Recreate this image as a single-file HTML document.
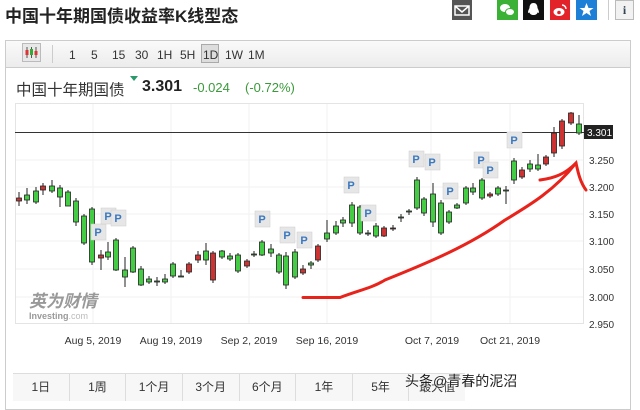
<!DOCTYPE html>
<html><head><meta charset="utf-8"><style>
body{margin:0;width:640px;height:400px;background:#fff;overflow:hidden;position:relative;font-family:"Liberation Sans","Noto Sans CJK SC",sans-serif}
.a{position:absolute}
.ic{position:absolute;top:0;width:20px;height:20px}
.tb span{position:absolute;top:48px;font-size:12px;color:#333}
.btns{position:absolute;left:13px;top:373px;width:452px;height:27px;border-top:1px solid #ddd;background:#f7f7f7;display:flex}
.btns div{flex:1;border-right:1px solid #ddd;text-align:center;font-size:12px;line-height:26px;color:#333}
</style></head><body>
<div class="a" style="left:5px;top:2px;font-size:17px;font-weight:bold;color:#222">中国十年期国债收益率K线型态</div>
<div class="ic" style="left:452px;background:#555"><svg width="20" height="20"><path d="M3 6h14v9H3zM3 6l7 6 7-6" fill="none" stroke="#fff" stroke-width="1.5"/></svg></div>
<div class="ic" style="left:497px;background:#3bb236;width:21px"><svg width="21" height="20"><ellipse cx="8" cy="8" rx="5" ry="4" fill="#fff"/><ellipse cx="13" cy="12" rx="4.5" ry="3.5" fill="#fff" stroke="#3bb236"/></svg></div>
<div class="ic" style="left:523px;background:#111;width:21px"><svg width="21" height="20"><path d="M10.5 3c3 0 4 2.5 4 5 1 2 2 4 1 5-1 0-1-1-1-1 0 2-2 3-4 3s-4-1-4-3c0 0 0 1-1 1-1-1 0-3 1-5 0-2.5 1-5 4-5z" fill="#fff"/></svg></div>
<div class="ic" style="left:550px;background:#e2232a"><svg width="20" height="20"><ellipse cx="9" cy="12" rx="5.5" ry="4" fill="#fff"/><circle cx="9" cy="12.5" r="1.8" fill="#e2232a"/><path d="M12 5a4 4 0 0 1 4 4" stroke="#fff" fill="none" stroke-width="1.5"/></svg></div>
<div class="ic" style="left:576px;background:#1e7fd6;width:21px"><svg width="21" height="20"><path d="M10.5 3l2 5h5l-4 3 1.5 5-4.5-3-4.5 3 1.5-5-4-3h5z" fill="#fff"/></svg></div>
<div class="a" style="left:608px;top:0;width:1px;height:20px;background:#ccc"></div>
<div class="a" style="left:615px;top:0;width:19px;height:20px;background:#f2f2f2;border:1px solid #bbb;box-sizing:border-box;font:bold 12px 'Liberation Serif',serif;color:#345;text-align:center;line-height:19px">i</div>

<div class="a" style="left:5px;top:40px;width:626px;height:370px;border:1px solid #ccc;box-sizing:border-box"></div>
<div class="a" style="left:6px;top:41px;width:624px;height:26px;background:linear-gradient(#fafafa,#ececec);border-bottom:1px solid #ccc"></div>
<div class="a" style="left:22px;top:43px;width:19px;height:19px;border:1px solid #bbb;background:#e8e8e8;box-sizing:border-box"><svg width="17" height="17"><path d="M4 3v11M8.5 3v11M13 3v11" stroke="#555"/><rect x="2.5" y="6" width="3" height="5" fill="#d33"/><rect x="7" y="5" width="3" height="6" fill="#3a3"/><rect x="11.5" y="7" width="3" height="4" fill="#d33"/></svg></div>
<div class="a" style="left:52px;top:45px;width:1px;height:18px;background:#ccc"></div>
<div class="a" style="left:201px;top:44px;width:18px;height:19px;border:1px solid #aaa;background:#ddd;box-sizing:border-box"></div>
<div class="tb"><span style="left:69px">1</span><span style="left:91px">5</span><span style="left:112px">15</span><span style="left:135px">30</span><span style="left:157px">1H</span><span style="left:180px">5H</span><span style="left:203px">1D</span><span style="left:225px">1W</span><span style="left:248px">1M</span></div>

<div class="a" style="left:16px;top:78px;font-size:15.5px;color:#333">中国十年期国债</div>
<svg class="a" style="left:130px;top:76px" width="8" height="6"><path d="M0 0h8l-4 5z" fill="#2a9a6a"/></svg>
<div class="a" style="left:142px;top:78px;font-size:16px;font-weight:bold;color:#222">3.301</div>
<div class="a" style="left:193px;top:80px;font-size:13px;color:#3a9a3a">-0.024</div>
<div class="a" style="left:245px;top:80px;font-size:13px;color:#3a9a3a">(-0.72%)</div>

<svg class="a" style="left:0;top:0" width="640" height="400">
<rect x="15.5" y="103.5" width="568" height="220" fill="none" stroke="#e4e4e4"/>
<g stroke="#f2f2f2"><path d="M93 104v219M171 104v219M249 104v219M327 104v219M431 104v219M510 104v219M16 160h567M16 187h567M16 214h567M16 241h567M16 269h567M16 297h567"/></g>
<path d="M15 132.5h570" stroke="#333"/>
<g stroke="#222" stroke-width="1">
<path d="M19 192v14M27 188v16M36 187v17M43 183v12M52 180v13M60 185v22M68 190v16M76 198v28M84 214v31M92 207v58M101 250v20M108 242v18M116 238v33M125 257v30M133 246v27M141 266v20M149 276v8M157 277v9M165 274v10M173 262v16M181 270v7M189 262v12M198 251v12M206 243v22M213 251v32M222 250v9M230 253v8M238 253v20M247 259v9M254 251v6M262 240v16M271 244v13M279 253v21M286 252v37M295 249v30M303 265v10M311 261v8M318 244v18M327 220v22M336 221v14M343 217v10M352 202v25M360 205v30M368 230v6M376 223v15M384 226v11M393 225v6M401 214v8M409 209v6M417 177v33M424 197v19M433 183v44M441 200v35M449 210v14M457 203v6M466 186v19M473 183v12M482 178v22M490 192v6M498 186v10M506 186v18M514 158v26M522 167v12M530 160v12M538 154v17M546 155v11M554 127v30M562 119v30M571 112v13M579 115v20"/>
</g>
<g stroke="#222" stroke-width="0.8">
<rect x="16.5" y="198" width="5" height="3" fill="#c33"/>
<rect x="24.5" y="195" width="5" height="5" fill="#4c4"/>
<rect x="33.5" y="191" width="5" height="11" fill="#4c4"/>
<rect x="40.5" y="186" width="5" height="4" fill="#c33"/>
<rect x="49.5" y="186" width="5" height="5" fill="#4c4"/>
<rect x="57.5" y="188" width="5" height="9" fill="#4c4"/>
<rect x="65.5" y="192" width="5" height="14" fill="#4c4"/>
<rect x="73.5" y="201" width="5" height="21" fill="#4c4"/>
<rect x="81.5" y="216" width="5" height="27" fill="#4c4"/>
<rect x="89.5" y="209" width="5" height="53" fill="#4c4"/>
<rect x="98.5" y="255" width="5" height="3" fill="#c33"/>
<rect x="105.5" y="252" width="5" height="5" fill="#4c4"/>
<rect x="113.5" y="240" width="5" height="30" fill="#4c4"/>
<rect x="122.5" y="270" width="5" height="7" fill="#4c4"/>
<rect x="130.5" y="248" width="5" height="24" fill="#4c4"/>
<rect x="138.5" y="269" width="5" height="16" fill="#4c4"/>
<rect x="146.5" y="279" width="5" height="3" fill="#4c4"/>
<rect x="154.5" y="281" width="5" height="1" fill="#4c4"/>
<rect x="162.5" y="279" width="5" height="3" fill="#4c4"/>
<rect x="170.5" y="264" width="5" height="12" fill="#4c4"/>
<rect x="178.5" y="276" width="5" height="1" fill="#4c4"/>
<rect x="186.5" y="264" width="5" height="8" fill="#c33"/>
<rect x="195.5" y="255" width="5" height="5" fill="#c33"/>
<rect x="203.5" y="251" width="5" height="9" fill="#4c4"/>
<rect x="210.5" y="253" width="5" height="27" fill="#c33"/>
<rect x="219.5" y="251" width="5" height="6" fill="#4c4"/>
<rect x="227.5" y="256" width="5" height="3" fill="#4c4"/>
<rect x="235.5" y="255" width="5" height="16" fill="#4c4"/>
<rect x="244.5" y="261" width="5" height="5" fill="#c33"/>
<rect x="251.5" y="254" width="5" height="1" fill="#4c4"/>
<rect x="259.5" y="242" width="5" height="13" fill="#4c4"/>
<rect x="268.5" y="249" width="5" height="4" fill="#4c4"/>
<rect x="276.5" y="255" width="5" height="17" fill="#4c4"/>
<rect x="283.5" y="256" width="5" height="29" fill="#4c4"/>
<rect x="292.5" y="252" width="5" height="25" fill="#4c4"/>
<rect x="300.5" y="269" width="5" height="4" fill="#c33"/>
<rect x="308.5" y="263" width="5" height="2" fill="#4c4"/>
<rect x="315.5" y="246" width="5" height="14" fill="#c33"/>
<rect x="324.5" y="233" width="5" height="6" fill="#4c4"/>
<rect x="333.5" y="226" width="5" height="7" fill="#4c4"/>
<rect x="340.5" y="220" width="5" height="3" fill="#4c4"/>
<rect x="349.5" y="205" width="5" height="18" fill="#4c4"/>
<rect x="357.5" y="207" width="5" height="26" fill="#4c4"/>
<rect x="365.5" y="233" width="5" height="1" fill="#4c4"/>
<rect x="373.5" y="226" width="5" height="10" fill="#4c4"/>
<rect x="381.5" y="228" width="5" height="8" fill="#c33"/>
<rect x="390.5" y="228" width="5" height="1" fill="#c33"/>
<rect x="398.5" y="217" width="5" height="1" fill="#4c4"/>
<rect x="406.5" y="211" width="5" height="1" fill="#4c4"/>
<rect x="414.5" y="180" width="5" height="28" fill="#4c4"/>
<rect x="421.5" y="199" width="5" height="14" fill="#4c4"/>
<rect x="430.5" y="194" width="5" height="28" fill="#4c4"/>
<rect x="438.5" y="203" width="5" height="30" fill="#4c4"/>
<rect x="446.5" y="212" width="5" height="10" fill="#4c4"/>
<rect x="454.5" y="205" width="5" height="3" fill="#4c4"/>
<rect x="463.5" y="188" width="5" height="15" fill="#4c4"/>
<rect x="470.5" y="188" width="5" height="4" fill="#4c4"/>
<rect x="479.5" y="180" width="5" height="18" fill="#4c4"/>
<rect x="487.5" y="194" width="5" height="2" fill="#c33"/>
<rect x="495.5" y="188" width="5" height="6" fill="#4c4"/>
<rect x="503.5" y="190" width="5" height="1" fill="#4c4"/>
<rect x="511.5" y="161" width="5" height="19" fill="#4c4"/>
<rect x="519.5" y="170" width="5" height="7" fill="#c33"/>
<rect x="527.5" y="164" width="5" height="5" fill="#4c4"/>
<rect x="535.5" y="165" width="5" height="4" fill="#4c4"/>
<rect x="543.5" y="157" width="5" height="7" fill="#c33"/>
<rect x="551.5" y="133" width="5" height="20" fill="#c33"/>
<rect x="559.5" y="121" width="5" height="25" fill="#c33"/>
<rect x="568.5" y="113" width="5" height="10" fill="#c33"/>
<rect x="576.5" y="124" width="5" height="9" fill="#4c4"/>
</g>
<g font-family="Liberation Sans,sans-serif" font-size="11" font-weight="bold" fill="#3a78c0" text-anchor="middle">
<g fill="#e6e6e6" stroke="#ccc" stroke-width="0.5">
<rect x="91" y="224" width="15" height="16"/><rect x="101" y="208" width="15" height="16"/><rect x="111" y="210" width="15" height="16"/>
<rect x="255" y="211" width="15" height="16"/><rect x="280" y="227" width="15" height="16"/><rect x="297" y="232" width="15" height="16"/>
<rect x="344" y="177" width="15" height="16"/><rect x="361" y="205" width="15" height="16"/><rect x="409" y="151" width="15" height="16"/><rect x="425" y="154" width="15" height="16"/><rect x="443" y="183" width="15" height="16"/><rect x="474" y="152" width="15" height="16"/><rect x="483" y="162" width="15" height="16"/><rect x="507" y="132" width="15" height="16"/>
</g>
<text x="98" y="236">P</text><text x="108" y="220">P</text><text x="118" y="222">P</text><text x="262" y="223">P</text><text x="287" y="239">P</text><text x="304" y="244">P</text><text x="351" y="189">P</text><text x="368" y="217">P</text><text x="416" y="163">P</text><text x="432" y="166">P</text><text x="450" y="195">P</text><text x="481" y="164">P</text><text x="490" y="174">P</text><text x="514" y="144">P</text>
</g>
<g fill="none" stroke="#e8231c" stroke-width="3" stroke-linecap="round">
<path d="M303 297.5H340C360 290 372 288 385 280C430 262 470 245 505 220C530 205 555 190 576 163"/>
<path d="M540 180C555 178 565 174 576 163C578 172 580 182 586 190"/>
</g>
<rect x="584" y="125" width="29" height="14" fill="#222"/>
<text x="587" y="136" font-size="10" fill="#fff" font-family="Liberation Sans,sans-serif">3.301</text>
<g font-size="10" fill="#333" font-family="Liberation Sans,sans-serif">
<text x="589" y="164">3.250</text><text x="589" y="191">3.200</text><text x="589" y="218">3.150</text><text x="589" y="245">3.100</text><text x="589" y="273">3.050</text><text x="589" y="301">3.000</text><text x="589" y="328">2.950</text>
</g>
<g font-size="10.5" fill="#333" font-family="Liberation Sans,sans-serif" text-anchor="middle">
<text x="93" y="344">Aug 5, 2019</text><text x="171" y="344">Aug 19, 2019</text><text x="249" y="344">Sep 2, 2019</text><text x="327" y="344">Sep 16, 2019</text><text x="432" y="344">Oct 7, 2019</text><text x="510" y="344">Oct 21, 2019</text>
</g>
<text x="29" y="307" font-size="17" font-weight="bold" fill="#999" font-family="Noto Sans CJK SC,sans-serif" font-style="italic">英为财情</text>
<text x="29" y="319" font-size="9" font-weight="bold" fill="#999" font-family="Liberation Sans,sans-serif">Investing<tspan font-weight="normal" fill="#bbb">.com</tspan></text>
</svg>
<div class="btns"><div>1日</div><div>1周</div><div>1个月</div><div>3个月</div><div>6个月</div><div>1年</div><div>5年</div><div style="border:0">最大值</div></div>
<div class="a" style="left:405px;top:371px;font-size:14px;color:#222;text-shadow:0 0 2px #fff,0 0 2px #fff">头条@青春的泥沼</div>
</body></html>
